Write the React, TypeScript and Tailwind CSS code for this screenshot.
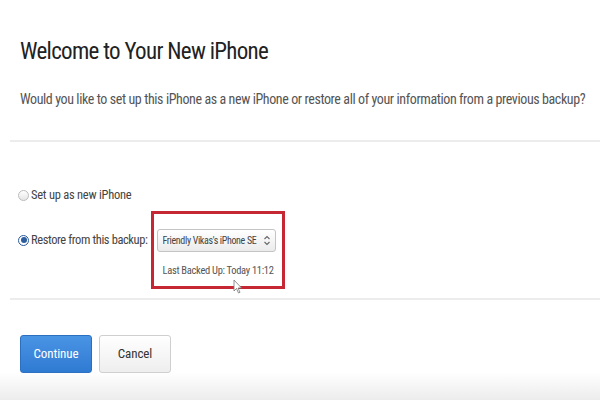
import React from "react";

export default function App() {
  return (
    <div
      className="relative w-[600px] h-[400px] bg-white overflow-hidden text-[#333] [font-stretch:85%]"
      style={{ fontFamily: 'Roboto, "Noto Sans", sans-serif' }}
    >
      <div className="pl-[20px] pt-[36px]">
        <h1 className="text-[23px] leading-[32px] text-[#222] tracking-[-0.7px] whitespace-nowrap">Welcome to Your New iPhone</h1>
        <p className="mt-[21px] text-[14px] leading-[20px] text-[#555] tracking-[-0.4px] whitespace-nowrap">
          Would you like to set up this iPhone as a new iPhone or restore all of your information from a previous backup?
        </p>
      </div>
      <div className="mt-[31px] ml-[10px] h-[2px] bg-[#ececec]" />
      <div className="pl-[18px] pt-[43px]">
        <div className="flex items-center h-[20px]">
          <span className="w-[11px] h-[11px] rounded-full border border-[#bbb] bg-gradient-to-b from-white to-[#e6e6e6]" />
          <span className="ml-[2px] text-[12.5px] text-[#444] tracking-[-0.25px] whitespace-nowrap">Set up as new iPhone</span>
        </div>
        <div className="flex items-start mt-[6px]">
          <div className="flex items-center h-[20px] mt-[19px]">
            <span className="flex items-center justify-center w-[11px] h-[11px] rounded-full border border-[#2a5a9a] bg-white">
              <span className="w-[6px] h-[6px] rounded-full bg-[#2c5d9f]" />
            </span>
            <span className="ml-[2px] text-[12.5px] text-[#444] tracking-[-0.4px] whitespace-nowrap">Restore from this backup:</span>
          </div>
          <div className="ml-[3px] w-[134px] h-[78px] border-[3px] border-[#c52733] flex flex-col items-start">
            <div className="mt-[15px] ml-[3px] w-[119px] h-[23px] rounded-[3px] border border-[#c4c4c4] bg-gradient-to-b from-white to-[#ebebeb] flex items-center pl-[5px] pr-[4px]">
              <span className="text-[10px] text-[#444] tracking-[-0.35px] whitespace-nowrap flex-1 overflow-hidden">Friendly Vikas's iPhone SE</span>
              <svg width="8" height="11" viewBox="0 0 8 11" fill="none" stroke="#666" strokeWidth="1.1">
                <path d="M1.5 4 L4 1.5 L6.5 4" />
                <path d="M1.5 7 L4 9.5 L6.5 7" />
              </svg>
            </div>
            <div className="mt-[12px] ml-[9px] text-[10.5px] leading-[14px] text-[#555] tracking-[-0.3px] whitespace-nowrap">Last Backed Up: Today 11:12</div>
          </div>
        </div>
      </div>
      <div className="mt-[9px] ml-[10px] h-[2px] bg-[#ececec]" />
      <div className="flex gap-[7px] pl-[20px] pt-[35px]">
        <button className="w-[72px] h-[38px] rounded-[3px] bg-gradient-to-b from-[#4a94e4] to-[#2f7bd3] border border-[#2b6fc0] text-white text-[13px] tracking-[-0.1px]">
          Continue
        </button>
        <button className="w-[72px] h-[38px] rounded-[3px] bg-gradient-to-b from-white to-[#eeeeee] border border-[#cfcfcf] text-[#333] text-[13px] tracking-[-0.1px]">
          Cancel
        </button>
      </div>
      <div className="absolute left-0 right-0 bottom-0 h-[28px] bg-gradient-to-b from-white/0 to-[#ececec]" />
      <svg className="absolute left-[233px] top-[279px]" width="10" height="15" viewBox="0 0 10 15">
        <path d="M1 1 L1 12 L3.5 9.5 L5.5 14 L7 13.3 L5 9 L8.5 9 Z" fill="white" stroke="#777" strokeWidth="0.8" />
      </svg>
    </div>
  );
}
